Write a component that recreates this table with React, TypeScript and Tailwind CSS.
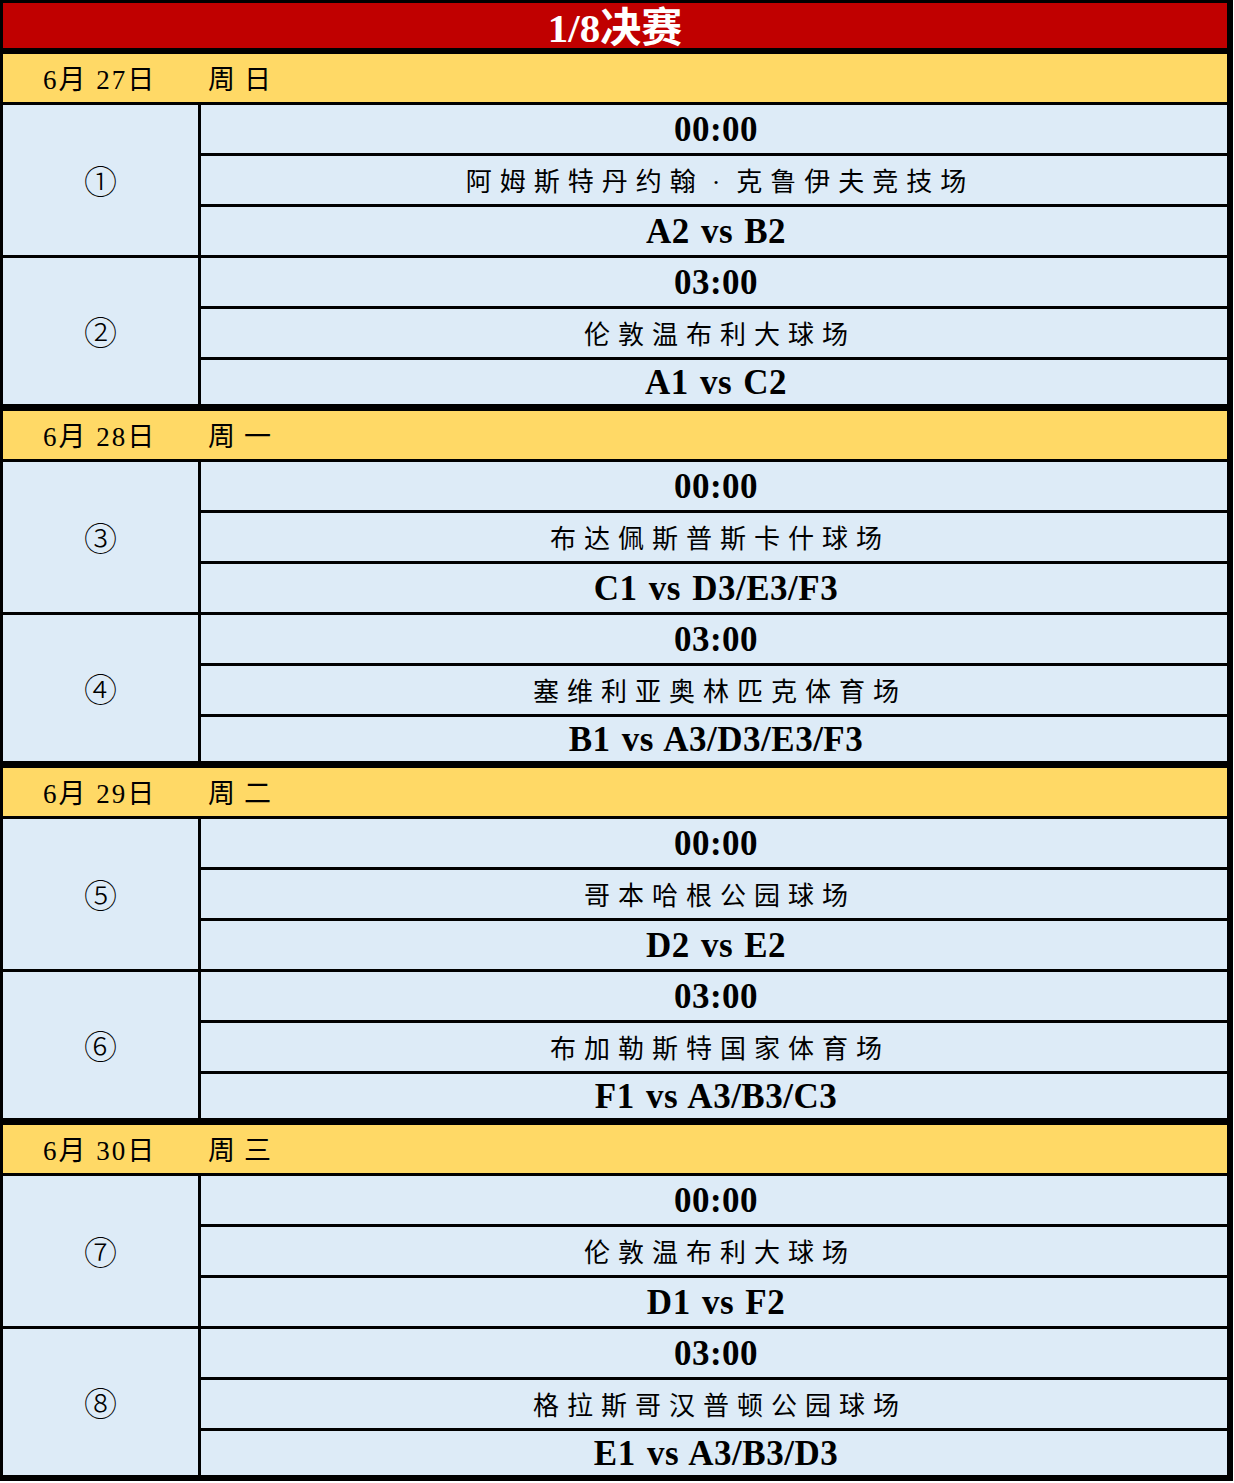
const FONT = "font-['Liberation_Serif','Noto_Sans_CJK_SC',serif]";

type Match = { no: string; time: string; venue: string; teams: string };
type Day = { date: string; week: string; matches: [Match, Match] };

const days: Day[] = [
  {
    date: "6月 27日",
    week: "周日",
    matches: [
      { no: "①", time: "00:00", venue: "阿姆斯特丹约翰·克鲁伊夫竞技场", teams: "A2 vs B2" },
      { no: "②", time: "03:00", venue: "伦敦温布利大球场", teams: "A1 vs C2" },
    ],
  },
  {
    date: "6月 28日",
    week: "周一",
    matches: [
      { no: "③", time: "00:00", venue: "布达佩斯普斯卡什球场", teams: "C1 vs D3/E3/F3" },
      { no: "④", time: "03:00", venue: "塞维利亚奥林匹克体育场", teams: "B1 vs A3/D3/E3/F3" },
    ],
  },
  {
    date: "6月 29日",
    week: "周二",
    matches: [
      { no: "⑤", time: "00:00", venue: "哥本哈根公园球场", teams: "D2 vs E2" },
      { no: "⑥", time: "03:00", venue: "布加勒斯特国家体育场", teams: "F1 vs A3/B3/C3" },
    ],
  },
  {
    date: "6月 30日",
    week: "周三",
    matches: [
      { no: "⑦", time: "00:00", venue: "伦敦温布利大球场", teams: "D1 vs F2" },
      { no: "⑧", time: "03:00", venue: "格拉斯哥汉普顿公园球场", teams: "E1 vs A3/B3/D3" },
    ],
  },
];

function Venue({ text }: { text: string }) {
  // the middle dot in names gets a bit of room on each side
  const parts = text.split("·");
  if (parts.length < 2) return <>{text}</>;
  return (
    <>
      {parts[0]}
      <span className="mx-[8px]">·</span>
      {parts[1]}
    </>
  );
}

function MatchBlock({ m, last }: { m: Match; last: boolean }) {
  return (
    <div className={`flex ${last ? "h-[146px]" : "h-[153px] border-b-[3px] border-black"}`}>
      {/* number cell spans the three rows */}
      <div className="w-[198px] shrink-0 border-r-[3px] border-black flex items-center justify-center">
        <span className="text-[33px] leading-none font-['Noto_Sans_CJK_SC',sans-serif] font-light">{m.no}</span>
      </div>
      <div className="flex-1 flex flex-col">
        <div className="h-[51px] border-b-[3px] border-black flex items-center justify-center pl-[4px]">
          <span className="text-[35px] font-bold leading-none tracking-[0.5px]">{m.time}</span>
        </div>
        <div className="h-[51px] border-b-[3px] border-black flex items-center justify-center pt-[5px] pl-[4px]">
          <span className="text-[26px] leading-none tracking-[8px] pl-[8px]">
            <Venue text={m.venue} />
          </span>
        </div>
        <div className="flex-1 flex items-center justify-center pl-[4px]">
          <span className="text-[35px] font-bold leading-none tracking-[0.5px] [word-spacing:2px]">{m.teams}</span>
        </div>
      </div>
    </div>
  );
}

export default function App() {
  return (
    <div className="bg-white min-h-[1483px]">
      <div className={`w-[1233px] border-black border-t-[3px] border-l-[3px] border-r-[6px] border-b-[6px] bg-[#ddebf7] text-black ${FONT}`}>
        <div className="h-[51px] bg-[#c00000] border-b-[6px] border-black flex items-center justify-center pt-[6px]">
          <span className="text-white text-[41px] font-bold leading-none">1/8决赛</span>
        </div>

        {days.map((d, i) => (
          <div key={d.date} className={i < days.length - 1 ? "border-b-[7px] border-black" : ""}>
            <div className="h-[51px] bg-[#ffd966] border-b-[3px] border-black flex items-center pl-[40px] pt-[4px]">
              <span className="w-[165px] text-[27px] leading-none tracking-[2px]">{d.date}</span>
              <span className="text-[27px] leading-none tracking-[9px]">{d.week}</span>
            </div>
            <MatchBlock m={d.matches[0]} last={false} />
            <MatchBlock m={d.matches[1]} last={true} />
          </div>
        ))}
      </div>
    </div>
  );
}
